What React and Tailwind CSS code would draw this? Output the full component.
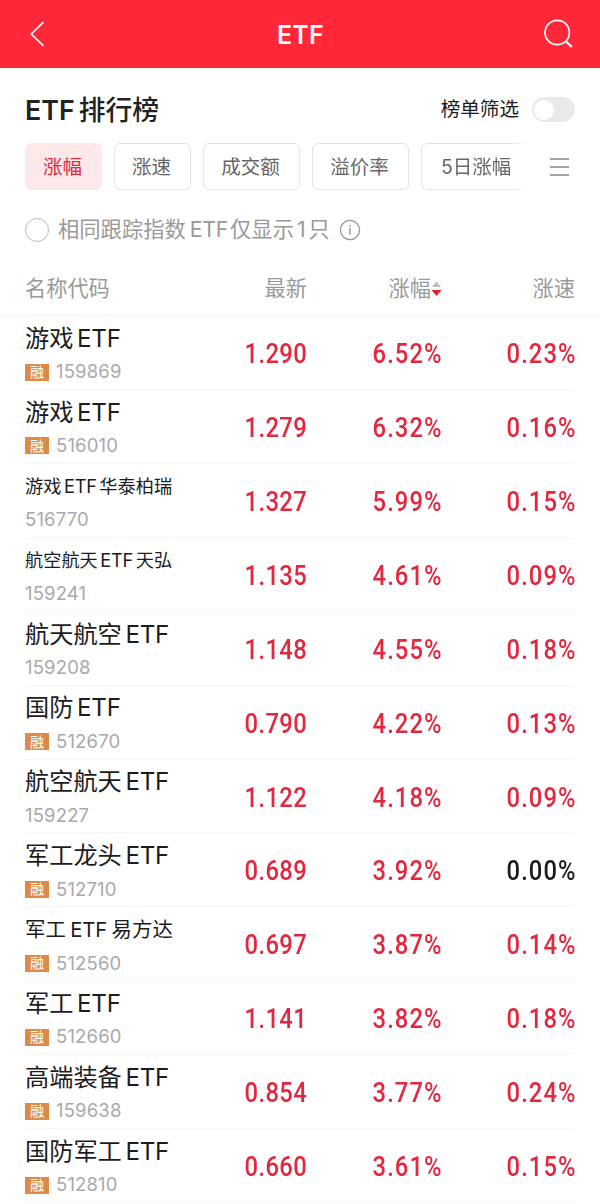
const rows = [
  { name: '游戏ETF', code: '159869', margin: true, price: '1.290', change: '6.52%', speed: '0.23%' },
  { name: '游戏ETF', code: '516010', margin: true, price: '1.279', change: '6.32%', speed: '0.16%' },
  { name: '游戏ETF华泰柏瑞', code: '516770', price: '1.327', change: '5.99%', speed: '0.15%' },
  { name: '航空航天ETF天弘', code: '159241', price: '1.135', change: '4.61%', speed: '0.09%' },
  { name: '航天航空ETF', code: '159208', price: '1.148', change: '4.55%', speed: '0.18%' },
  { name: '国防ETF', code: '512670', margin: true, price: '0.790', change: '4.22%', speed: '0.13%' },
  { name: '航空航天ETF', code: '159227', price: '1.122', change: '4.18%', speed: '0.09%' },
  { name: '军工龙头ETF', code: '512710', margin: true, price: '0.689', change: '3.92%', speed: '0.00%' },
  { name: '军工ETF易方达', code: '512560', margin: true, price: '0.697', change: '3.87%', speed: '0.14%' },
  { name: '军工ETF', code: '512660', margin: true, price: '1.141', change: '3.82%', speed: '0.18%' },
  { name: '高端装备ETF', code: '159638', margin: true, price: '0.854', change: '3.77%', speed: '0.24%' },
  { name: '国防军工ETF', code: '512810', margin: true, price: '0.660', change: '3.61%', speed: '0.15%' },
];

const tabs = [
  { label: '涨幅', width: 'w-[77px]', active: true },
  { label: '涨速', width: 'w-[77px]' },
  { label: '成交额', width: 'w-[97px]' },
  { label: '溢价率', width: 'w-[97px]' },
];

function Header() {
  return (
    <header className="flex h-[68px] items-center justify-between bg-[#ff2738] pr-[27px] pl-[29px] text-white">
      <svg width="18" height="28" viewBox="0 0 18 28" fill="none" stroke="currentColor" strokeWidth="1.7">
        <path d="M14.5 2.2 2.3 14l12.2 11.8" />
      </svg>
      <h1 className="pt-1 pl-[11px] text-[25px] font-semibold tracking-[0.3px]">ETF</h1>
      <svg width="30" height="30" viewBox="0 0 30 30" fill="none" stroke="currentColor" strokeWidth="1.7">
        <circle cx="14.2" cy="13.5" r="12.2" />
        <path d="m22.6 22 6.2 6" strokeWidth="2.2" />
      </svg>
    </header>
  );
}

function SortArrows() {
  return (
    <svg width="11" height="16" viewBox="0 0 11 16" className="-mr-px">
      <path d="M5.5 .5 10 6H1z" fill="#bdbdbd" />
      <path d="M.5 9h10l-5 6z" fill="#d9242f" />
    </svg>
  );
}

const nameSize = (name) => {
  if (name.length > 8) return 'text-[18.2px] gap-[0.14em]';
  if (name.length > 7) return 'text-[20.4px] gap-[0.22em]';
  return 'text-[24.2px] gap-[0.15em]';
};

// Chinese names mix in "ETF", which gets a little air on both sides
function FundName({ name }) {
  const [before, after] = name.split('ETF');
  return (
    <div className={`flex h-9 items-center whitespace-nowrap text-[#1c1c1e] ${nameSize(name)}`}>
      <span>{before}</span>
      <span className="tracking-[-0.01em]">ETF</span>
      <span>{after}</span>
    </div>
  );
}

function Row({ row }) {
  return (
    <li className="mr-[25px] ml-[25px] grid h-[73.93px] grid-cols-[182px_100px_134px_134px] border-b border-[#f6f6f6] text-right">
      <div className="pt-[5px] text-left">
        <FundName name={row.name} />
        <div className="mt-[3px] flex h-6 items-center gap-[7px]">
          {row.margin && (
            <span className="flex h-[17px] w-6 items-center justify-center bg-[#dd8a48] text-sm leading-none text-white">
              融
            </span>
          )}
          <span className="text-[18.5px] tracking-[0.15px] text-[#a9a9ab]">{row.code}</span>
        </div>
      </div>
      <Value className="tracking-[0.4px]">{row.price}</Value>
      <Value className="-mr-[1.5px] tracking-[1.2px]">{row.change}</Value>
      <Value className="-mr-[1.5px] tracking-[1.2px]" flat={row.speed === '0.00%'}>
        {row.speed}
      </Value>
    </li>
  );
}

// Narrow, loosely spaced digits
function Value({ children, className, flat }) {
  return (
    <span
      className={`origin-right scale-x-[0.88] pt-px font-[Roboto] text-[27px] leading-[74px] font-medium ${className} ${flat ? 'text-[#1c1c1e]' : 'text-[#e2283f]'}`}
    >
      {children}
    </span>
  );
}

export default function App() {
  return (
    <div className="h-[1204px] w-[600px] overflow-hidden bg-white font-[Inter,'Noto_Sans_CJK_SC',sans-serif]">
      <Header />

      <div className="flex h-[75px] items-center justify-between pt-[9px] pr-[25px] pl-[25px]">
        <h2 className="flex items-center text-[26.8px] font-semibold text-[#222]">
          <span className="mr-1">ETF</span>
          <span className="font-medium">排行榜</span>
        </h2>
        <div className="flex items-center gap-[13px]">
          <span className="text-[19.6px] text-[#1c1c1e]">榜单筛选</span>
          <span className="flex h-[25px] w-[43px] items-center rounded-full bg-[#e9e9eb] px-[2px]">
            <span className="size-5 rounded-full bg-white" />
          </span>
        </div>
      </div>

      <div className="flex h-[47px] items-center pl-[25px]">
        <nav className="flex gap-3 text-[19.5px] text-[#666]">
          {tabs.map((tab) => (
            <span
              key={tab.label}
              className={`flex h-[47px] items-center justify-center rounded-md border pt-0.5 pr-0.5 ${tab.width} ${
                tab.active ? 'border-[#fde8ea] bg-[#fde8ea] text-[#e2283f]' : 'border-[#e2e2e2]'
              }`}
            >
              {tab.label}
            </span>
          ))}
          <span className="flex h-[47px] w-[109px] items-center rounded-l-md border border-r-0 border-[#e2e2e2] pt-0.5 pl-[19px] [mask-image:linear-gradient(to_right,black_80%,transparent)]">
            5日涨幅
          </span>
        </nav>
        <svg width="20" height="18" viewBox="0 0 20 18" stroke="#888" strokeWidth="1.3" className="ml-5">
          <path d="M0 1h19M0 9h19M0 17h19" />
        </svg>
      </div>

      <div className="flex h-[80px] items-center pl-[25px] text-[21.3px] text-[#999]">
        <span className="mr-[9px] size-6 rounded-full border-[1.5px] border-[#bbb]" />
        <span>相同跟踪指数</span>
        <span className="mr-[2px] ml-1 tracking-[-0.3px]">ETF</span>
        <span>仅显示</span>
        <span className="mr-[3px] ml-[3px]">1</span>
        <span>只</span>
        <svg width="22" height="22" viewBox="0 0 22 22" fill="none" stroke="#999" strokeWidth="1.3" className="ml-[9px]">
          <circle cx="11" cy="11" r="9.6" />
          <path d="M11 9.2v6.5M11 6v1.8" strokeWidth="1.5" />
        </svg>
      </div>

      <div className="grid h-[46px] grid-cols-[207px_100px_134px_134px] items-center border-b border-[#f3f3f3] pb-[7px] text-right text-[21.2px] text-[#999]">
        <span className="pl-[25px] text-left">名称代码</span>
        <span>最新</span>
        <span className="flex items-center justify-end">
          涨幅
          <SortArrows />
        </span>
        <span>涨速</span>
      </div>

      <ul>
        {rows.map((row) => (
          <Row key={row.code} row={row} />
        ))}
      </ul>
    </div>
  );
}
